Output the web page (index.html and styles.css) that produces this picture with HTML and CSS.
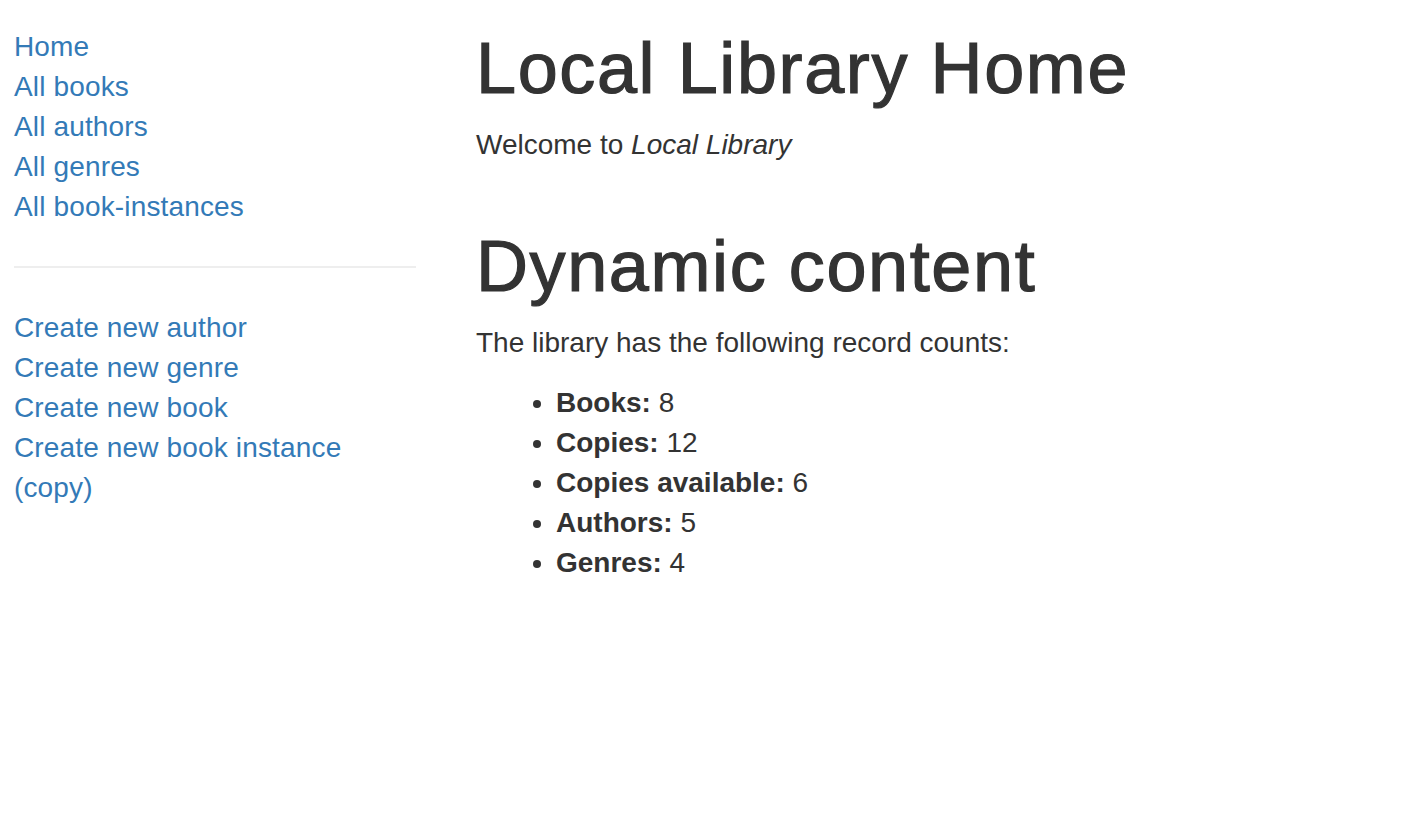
FILE: index.html
```html
<!DOCTYPE html>
<html lang="en">
<head>
<meta charset="utf-8">
<title>Local Library</title>
<link rel="stylesheet" href="styles.css">
</head>
<body>
<div class="page">
  <nav class="sidebar">
    <ul class="sidebar-nav">
      <li><a href="#">Home</a></li>
      <li><a href="#">All books</a></li>
      <li><a href="#">All authors</a></li>
      <li><a href="#">All genres</a></li>
      <li><a href="#">All book-instances</a></li>
    </ul>
    <hr class="divider">
    <ul class="sidebar-nav sidebar-nav-second">
      <li><a href="#">Create new author</a></li>
      <li><a href="#">Create new genre</a></li>
      <li><a href="#">Create new book</a></li>
      <li><a href="#">Create new book instance (copy)</a></li>
    </ul>
  </nav>
  <main class="content">
    <h1 class="title">Local Library Home</h1>
    <p class="text">Welcome to <em>Local Library</em></p>
    <h1 class="title title-section">Dynamic content</h1>
    <p class="text">The library has the following record counts:</p>
    <ul class="counts">
      <li><strong>Books:</strong> 8</li>
      <li><strong>Copies:</strong> 12</li>
      <li><strong>Copies available:</strong> 6</li>
      <li><strong>Authors:</strong> 5</li>
      <li><strong>Genres:</strong> 4</li>
    </ul>
  </main>
</div>
</body>
</html>
```
FILE: styles.css
```css
html, body {
  margin: 0;
  padding: 0;
  background: #fff;
}

body {
  font-family: "Liberation Sans", Arial, Helvetica, sans-serif;
  font-size: 28px;
  line-height: 40px;
  color: #333;
}

.page {
  display: flex;
  align-items: flex-start;
  padding-left: 14px;
  gap: 60px;
}

.sidebar {
  width: 402px;
  flex: 0 0 402px;
  padding-top: 27px;
}

.sidebar-nav {
  list-style: none;
  margin: 0;
  padding: 0;
  letter-spacing: 0.15px;
}

.sidebar-nav a {
  color: #337ab7;
  text-decoration: none;
}

.divider {
  margin: 39px 0 40px;
  border: 0;
  border-top: 2px solid #eee;
  height: 0;
}

.content {
  flex: 1;
  padding-top: 28.5px;
}

.title {
  font-size: 72px;
  line-height: 79px;
  font-weight: 500;
  letter-spacing: 1.6px;
  -webkit-text-stroke: 1.2px #333;
  margin: 0 0 17px;
  color: #333;
}

.title-section {
  margin-top: 62px;
}

.text {
  margin: 0 0 20px;
}

.counts {
  margin: 0;
  padding-left: 80px;
}

.counts strong {
  font-weight: 700;
}
```
